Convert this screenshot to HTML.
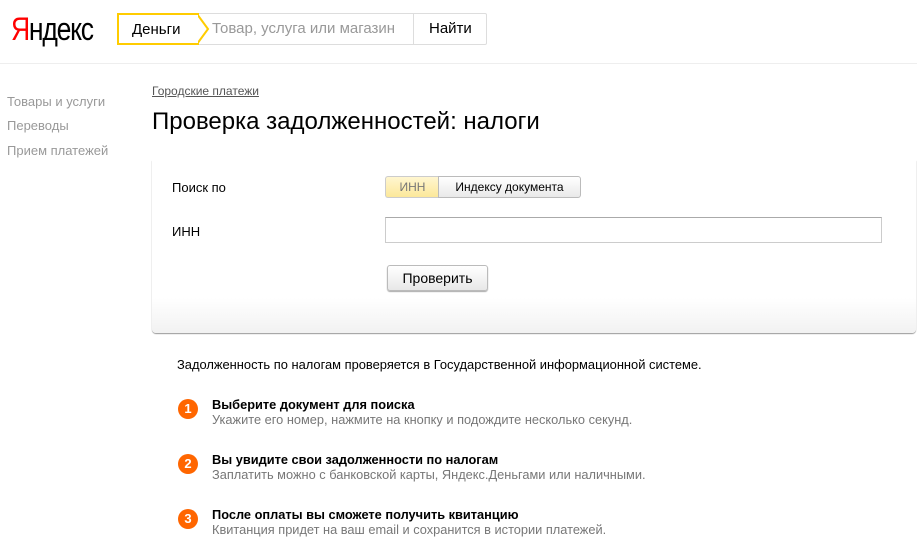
<!DOCTYPE html>
<html><head><meta charset="utf-8"><style>
*{margin:0;padding:0;box-sizing:border-box}
body{width:917px;height:542px;overflow:hidden;background:#fff;font-family:"Liberation Sans",Arial,sans-serif;position:relative;color:#000}
.a{position:absolute;white-space:nowrap}
.logo{left:11px;top:11px;font-size:32px;letter-spacing:-1.5px;font-family:"Liberation Sans",sans-serif;transform:scaleX(0.83);transform-origin:left}
.hr{left:0;top:63px;width:917px;height:1px;background:#eee}
.menu{left:7px;font-size:13px;color:#999}
.step{left:178px;width:20px;height:20px;border-radius:50%;background:#f60;color:#fff;font-weight:bold;font-size:13px;text-align:center;line-height:20px}
.t{left:212px;font-size:12.8px;font-weight:bold}
.s{left:212px;font-size:12.8px;color:#777}
</style></head><body>
<div class="a logo"><span style="color:#f00">Я</span>ндекс</div>
<div class="a" style="left:117px;top:13px;width:370px;height:32px;border:1px solid #ddd;border-radius:2px"></div>
<div class="a" style="left:117px;top:13px;width:82px;height:32px;border:2px solid #fc0;border-right:none;font-size:15px;padding:6px 0 0 13px">Деньги</div>
<svg class="a" style="left:196px;top:13px" width="16" height="32"><path d="M1 1 L12 16 L1 31" fill="#fff" stroke="#fc0" stroke-width="2"/><rect x="0" y="2" width="2" height="28" fill="#fff"/></svg>
<div class="a" style="left:212px;top:20px;font-size:15px;color:#999">Товар, услуга или магазин</div>
<div class="a" style="left:413px;top:13px;width:1px;height:32px;background:#ddd"></div>
<div class="a" style="left:429px;top:20px;font-size:15px">Найти</div>
<div class="a hr"></div>
<div class="a menu" style="top:94px">Товары и услуги</div>
<div class="a menu" style="top:118px">Переводы</div>
<div class="a menu" style="top:143px">Прием платежей</div>
<div class="a" style="left:152px;top:84px;font-size:12px;color:#555;text-decoration:underline">Городские платежи</div>
<div class="a" style="left:152px;top:108px;font-size:24px">Проверка задолженностей: налоги</div>
<div class="a" style="left:152px;top:160px;width:764px;height:173px;border-radius:0 0 4px 4px;box-shadow:0 1px 1px #999;background:linear-gradient(#fff 0,#fff 138px,#f2f2f2 172px)"></div>
<div class="a" style="left:172px;top:180px;font-size:13px">Поиск по</div>
<div class="a" style="left:385px;top:176px;width:54px;height:22px;border:1px solid #ccc;border-right:none;border-radius:3px 0 0 3px;background:linear-gradient(#fff6d0,#fce89a);font-size:12px;color:#777;text-align:center;line-height:20px">ИНН</div>
<div class="a" style="left:438px;top:176px;width:143px;height:22px;border:1px solid #bbb;border-radius:0 3px 3px 0;background:linear-gradient(#fff,#e9e9e9);font-size:12px;text-align:center;line-height:20px">Индексу документа</div>
<div class="a" style="left:172px;top:224px;font-size:13px">ИНН</div>
<div class="a" style="left:385px;top:217px;width:497px;height:26px;border:1px solid #ccc;border-top-color:#aaa"></div>
<div class="a" style="left:387px;top:265px;width:101px;height:26px;border:1px solid #bbb;border-radius:3px;background:linear-gradient(#fff,#e8e8e8);font-size:14px;text-align:center;line-height:24px;box-shadow:0 1px 1px #aaa">Проверить</div>
<div class="a" style="left:177px;top:357px;font-size:12.9px">Задолженность по налогам проверяется в Государственной информационной системе.</div>
<div class="a step" style="top:399px">1</div>
<div class="a t" style="top:397px">Выберите документ для поиска</div>
<div class="a s" style="top:412px">Укажите его номер, нажмите на кнопку и подождите несколько секунд.</div>
<div class="a step" style="top:454px">2</div>
<div class="a t" style="top:452px">Вы увидите свои задолженности по налогам</div>
<div class="a s" style="top:467px">Заплатить можно с банковской карты, Яндекс.Деньгами или наличными.</div>
<div class="a step" style="top:509px">3</div>
<div class="a t" style="top:507px">После оплаты вы сможете получить квитанцию</div>
<div class="a s" style="top:522px">Квитанция придет на ваш email и сохранится в истории платежей.</div>
</body></html>
